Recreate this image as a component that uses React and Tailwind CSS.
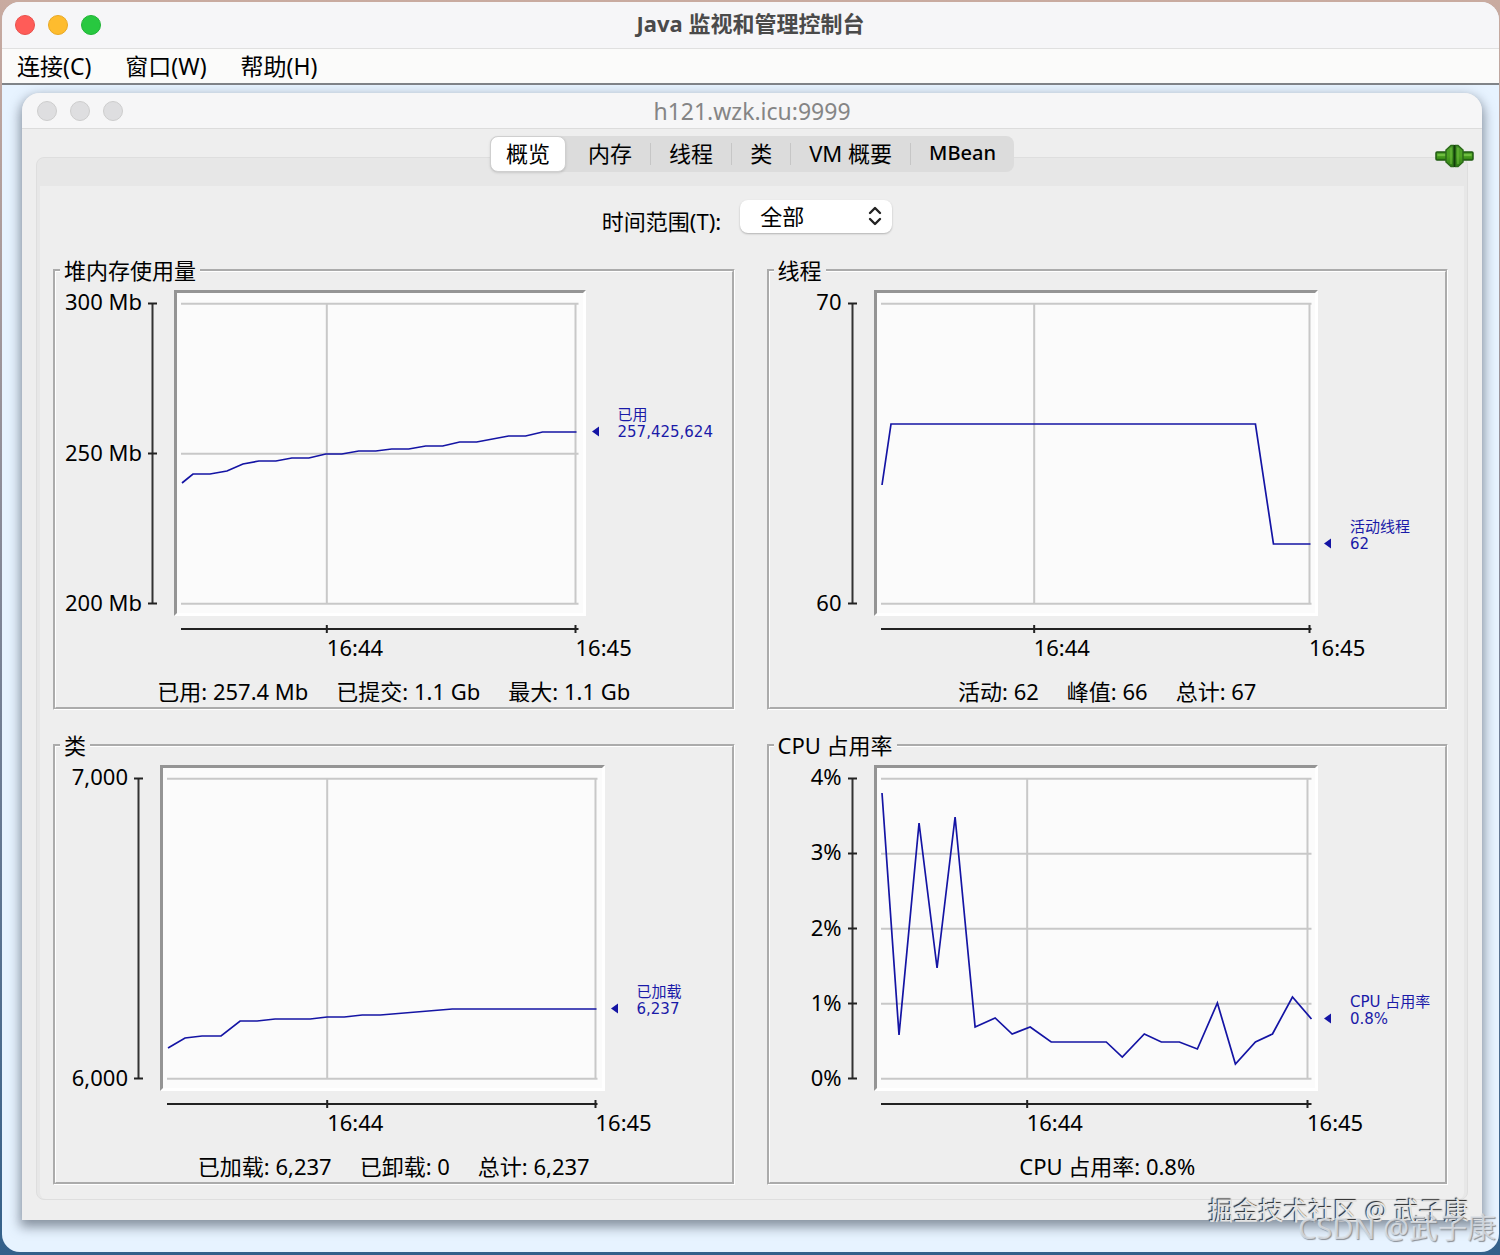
import clsx from "clsx";

const menus = ["连接(C)", "窗口(W)", "帮助(H)"];

const tabs = ["概览", "内存", "线程", "类", "VM 概要", "MBean"];

const HEIGHT = 320;

const charts = [
  {
    title: "堆内存使用量",
    wide: true,
    width: 406,
    yLabels: ["300 Mb", "250 Mb", "200 Mb"],
    ticks: [
      { x: 150, label: "16:44" },
      { x: 399, label: "16:45" },
    ],
    points:
      "5,190 16,181 33,181 50,178 66,171 82,168 99,168 115,165 132,165 149,161 165,161 182,158 199,158 215,156 232,156 249,153 266,153 283,149 300,149 332,143 349,143 366,139 400,139",
    marker: { name: "已用", value: "257,425,624", y: 139 },
    summary: ["已用: 257.4 Mb", "已提交: 1.1 Gb", "最大: 1.1 Gb"],
  },
  {
    title: "线程",
    width: 438,
    yLabels: ["70", "60"],
    ticks: [
      { x: 157, label: "16:44" },
      { x: 432, label: "16:45" },
    ],
    points: "5,192 14,131 378,131 396,251 433,251",
    marker: { name: "活动线程", value: "62", y: 251 },
    summary: ["活动: 62", "峰值: 66", "总计: 67"],
  },
  {
    title: "类",
    width: 438,
    yLabels: ["7,000", "6,000"],
    ticks: [
      { x: 164, label: "16:44" },
      { x: 432, label: "16:45" },
    ],
    points:
      "5,280 22,270 39,268 58,268 77,253 94,253 112,251 147,251 164,249 181,249 199,247 217,247 289,241 433,241",
    marker: { name: "已加载", value: "6,237", y: 241 },
    summary: ["已加载: 6,237", "已卸载: 0", "总计: 6,237"],
  },
  {
    title: "CPU 占用率",
    width: 438,
    yLabels: ["4%", "3%", "2%", "1%", "0%"],
    ticks: [
      { x: 150, label: "16:44" },
      { x: 430, label: "16:45" },
    ],
    points:
      "5,25 22,267 42,55 60,200 78,49 98,259 118,250 135,266 153,259 174,274 229,274 245,289 267,266 284,274 302,274 320,281 340,235 358,296 378,274 395,266 415,229 434,251",
    marker: { name: "CPU 占用率", value: "0.8%", y: 251 },
    summary: ["CPU 占用率: 0.8%"],
  },
];

const Lights = ({ colors, label }) => (
  <div className="flex gap-[13px]">
    {colors.map((color, index) => (
      <button
        key={index}
        type="button"
        aria-label={`${label} ${["关闭", "最小化", "缩放"][index]}`}
        className={clsx("size-5 rounded-full border", color)}
      />
    ))}
  </div>
);

const PlugIcon = () => (
  <svg viewBox="0 0 39 24" className="h-6 w-[39px]" aria-hidden="true">
    <defs>
      <linearGradient id="plug" x1="0" y1="0" x2="0" y2="1">
        <stop offset="0" stopColor="#4a9a2c" />
        <stop offset="0.5" stopColor="#4ea322" />
        <stop offset="1" stopColor="#2d7d12" />
      </linearGradient>
    </defs>
    <rect x="1" y="8" width="12" height="8" rx="1" fill="url(#plug)" stroke="#1f5a10" strokeWidth="1.5" />
    <rect x="26" y="8" width="12" height="8" rx="1" fill="url(#plug)" stroke="#1f5a10" strokeWidth="1.5" />
    <path d="M2.5 11H12M27 11h9.5" stroke="#7cc74c" strokeWidth="1.5" />
    <path d="M18.5 1.5h-2.5L11 6v12l5 4.5h2.5z" fill="url(#plug)" stroke="#2b6a1a" strokeWidth="1.5" />
    <path d="M20.5 1.5h2.5L28 6v12l-5 4.5h-2.5z" fill="url(#plug)" stroke="#2b6a1a" strokeWidth="1.5" />
    <path d="M19.5 1v22" stroke="#123f08" strokeWidth="1.5" />
    <path d="M16 4v16M23 4v16" stroke="#6cb83e" strokeWidth="1" />
  </svg>
);

const ChartPanel = ({ chart }) => {
  const { title, wide, width, yLabels, ticks, points, marker, summary } = chart;
  const gridRows = yLabels.map((_, i) => 10 + (i * 300) / (yLabels.length - 1));
  const percent = (x) => `${(x / width) * 100}%`;

  return (
    <fieldset className="min-w-0 border-[3px] border-white pb-[5px] [border-style:groove]">
      <legend className="ml-1 px-1 leading-[22px]">{title}</legend>
      <div className="mt-[9px] flex">
        <div className={clsx("flex h-[326px] shrink-0 justify-end gap-1.5 pr-[17px]", wide ? "w-[118px]" : "w-[104px]")}>
          <div className="flex flex-col justify-between pb-[3px] text-right leading-[22px] whitespace-nowrap">
            {yLabels.map((label) => (
              <span key={label}>{label}</span>
            ))}
          </div>
          <svg viewBox="0 0 9 326" className="h-[326px] w-[9px]" aria-hidden="true">
            <path d="M4.5 13V313" stroke="#333" strokeWidth="2" />
            {gridRows.map((y) => (
              <path key={y} d={`M0 ${y + 3.5}H9`} stroke="#222" strokeWidth="2" />
            ))}
          </svg>
        </div>

        <div className="min-w-0 flex-1">
          <div className="h-[326px] border-[3px] border-t-[#949494] border-r-white border-b-white border-l-[#949494] bg-[#fbfbfb]">
            <svg
              viewBox={`0 0 ${width} ${HEIGHT}`}
              preserveAspectRatio="none"
              className="size-full"
              role="img"
              aria-label={title}
            >
              <g stroke="#c8c8c8" strokeWidth="2">
                {gridRows.map((y) => (
                  <line key={y} x1="4" x2={width - 4} y1={y + 0.7} y2={y + 0.7} vectorEffect="non-scaling-stroke" />
                ))}
                {ticks.map(({ x }) => (
                  <line key={x} x1={x} x2={x} y1="10" y2="311" vectorEffect="non-scaling-stroke" />
                ))}
              </g>
              <polyline
                points={points}
                fill="none"
                stroke="#1414a4"
                strokeWidth="1.7"
                vectorEffect="non-scaling-stroke"
              />
            </svg>
          </div>
          <div className="px-[3px]">
            <svg
              viewBox={`0 0 ${width} 20`}
              preserveAspectRatio="none"
              className="h-5 w-full"
              aria-hidden="true"
            >
              <g stroke="#222" strokeWidth="2">
                <line x1="4" x2={width - 4} y1="13" y2="13" vectorEffect="non-scaling-stroke" />
                {ticks.map(({ x }) => (
                  <line key={x} x1={x} x2={x} y1="9" y2="17" vectorEffect="non-scaling-stroke" />
                ))}
              </g>
            </svg>
            <div className="flex leading-[22px] whitespace-nowrap">
              <span className="shrink-0" style={{ width: percent(ticks[0].x) }} />
              <span className="shrink-0" style={{ width: percent(ticks[1].x - ticks[0].x) }}>
                {ticks[0].label}
              </span>
              <span className="w-0">{ticks[1].label}</span>
            </div>
          </div>
        </div>

        <div
          className={clsx("shrink-0 text-[#1a1aa8]", wide ? "w-[146px]" : "w-[127px]")}
          style={{ paddingTop: marker.y - 22 }}
        >
          <div className="flex items-end gap-[18px] pl-1.5">
            <svg viewBox="0 0 8 17" className="h-[17px] w-2" aria-hidden="true">
              <path d="M0 7.5L7 2.5V12.5z" fill="#1414a4" />
            </svg>
            <div className="font-['DejaVu_Sans','Noto_Sans_CJK_SC',sans-serif] text-[15px] leading-[17px] whitespace-nowrap">
              <p>{marker.name}</p>
              <p>{marker.value}</p>
            </div>
          </div>
        </div>
      </div>

      <div className="mt-[22px] flex justify-center gap-7 leading-[22px] whitespace-nowrap">
        {summary.map((text) => (
          <span key={text}>{text}</span>
        ))}
      </div>
    </fieldset>
  );
};

const App = () => {
  return (
    <div className="relative flex min-h-screen flex-col overflow-hidden bg-linear-to-b from-[#c9aba0] via-[#7d8496] to-[#33608a] pt-0.5 pr-px pb-[3px] pl-0.5 font-['Noto_Sans','Noto_Sans_CJK_SC',sans-serif] text-[22px] text-black">
      <div className="flex flex-1 flex-col overflow-hidden rounded-[18px] bg-[#e7f3ff]">
        <header className="grid h-[47px] grid-cols-[1fr_auto_1fr] items-center border-b border-[#e0e0e0] bg-[#f6f6f8] px-[13px]">
          <Lights
            label="控制台"
            colors={["bg-[#ff5c58] border-[#e8504c]", "bg-[#febc2e] border-[#e8a825]", "bg-[#28c840] border-[#20b336]"]}
          />
          <h1 className="pb-1 leading-[22px] font-bold text-[#4a4a4a]">Java 监视和管理控制台</h1>
        </header>
        <nav className="flex h-9 items-center gap-[34px] border-b-2 border-[#808488] bg-[#fbfbfa] pl-[15px] text-[23px] leading-6">
          {menus.map((menu) => (
            <button key={menu} type="button">
              {menu}
            </button>
          ))}
        </nav>

        <main className="flex-1 pt-2 pr-[17px] pb-8 pl-5">
          <section className="relative rounded-t-[18px] bg-[#eee] shadow-[0_5px_12px_2px_rgba(70,80,95,0.6)]">
            <header className="grid h-9 grid-cols-[1fr_auto_1fr] items-center rounded-t-[18px] border-b border-[#dcdcdc] bg-[#f6f6f7] px-[15px]">
              <Lights
                label="连接窗口"
                colors={["bg-[#dedee0] border-[#cdcdcd]", "bg-[#dedee0] border-[#cdcdcd]", "bg-[#dedee0] border-[#cdcdcd]"]}
              />
              <h2 className="text-[23px] leading-6 text-[#858585]">h121.wzk.icu:9999</h2>
            </header>

            <div className="px-3.5 pt-[7px] pb-5">
              <div className="relative z-10 -mb-[15px] flex justify-center">
                <div role="tablist" className="flex h-9 items-center rounded-lg bg-[#dcdcdc]">
                  {tabs.map((tab, index) => (
                    <button
                      key={tab}
                      type="button"
                      role="tab"
                      aria-selected={index === 0}
                      className={clsx(
                        "flex items-center leading-[22px]",
                        index === 0
                          ? "mr-1 h-9 rounded-lg border border-[#cfcfcf] bg-white px-[15px] pb-0.5 shadow-sm"
                          : "h-[22px] px-[18px] pb-0.5",
                        index > 1 && "border-l border-[#c6c6c6]",
                        index === 5 && "text-[20px] font-medium"
                      )}
                    >
                      {tab}
                    </button>
                  ))}
                </div>
              </div>

              <div className="rounded-lg border border-[#dedede] bg-[#e7e7e7] px-[3px] pt-7">
                <div className="rounded-b-md bg-[#eee] pt-3.5 pr-4 pb-3.5 pl-[13px]">
                  <div className="flex items-end justify-center gap-[19px] pr-[7px]">
                    <label htmlFor="range" className="pb-px leading-[22px]">
                      时间范围(T):
                    </label>
                    <div className="relative">
                      <select
                        id="range"
                        className="block h-[33px] w-[152px] appearance-none rounded-lg bg-white pb-0.5 pl-5 leading-[22px] shadow-[0_1px_2px_rgba(0,0,0,0.25)]"
                      >
                        <option>全部</option>
                      </select>
                      <svg
                        viewBox="0 0 14 20"
                        className="pointer-events-none absolute top-1.5 right-2.5 h-5 w-3.5"
                        fill="none"
                        stroke="#222"
                        strokeWidth="2.4"
                        strokeLinecap="round"
                        strokeLinejoin="round"
                        aria-hidden="true"
                      >
                        <path d="M2 7l5-5 5 5M2 13l5 5 5-5" />
                      </svg>
                    </div>
                  </div>

                  <div className="mt-[26px] grid grid-cols-2 gap-x-8 gap-y-6">
                    {charts.map((chart) => (
                      <ChartPanel key={chart.title} chart={chart} />
                    ))}
                  </div>
                </div>
              </div>
            </div>

            <div className="absolute top-[51px] right-2 z-20">
              <PlugIcon />
            </div>
          </section>
        </main>
      </div>

      <p className="absolute right-[31px] bottom-8 z-30 text-[25px] leading-[26px] text-[#e4e4e4] [text-shadow:-1px_-1px_1px_#222]">
        掘金技术社区 @ 武子康
      </p>
      <p className="absolute right-1 bottom-3 z-30 text-[29px] leading-[30px] text-[#dfe3e8]/80 [text-shadow:1px_1px_1px_#8a8f96]">
        CSDN @武子康
      </p>
    </div>
  );
};

export default App;
